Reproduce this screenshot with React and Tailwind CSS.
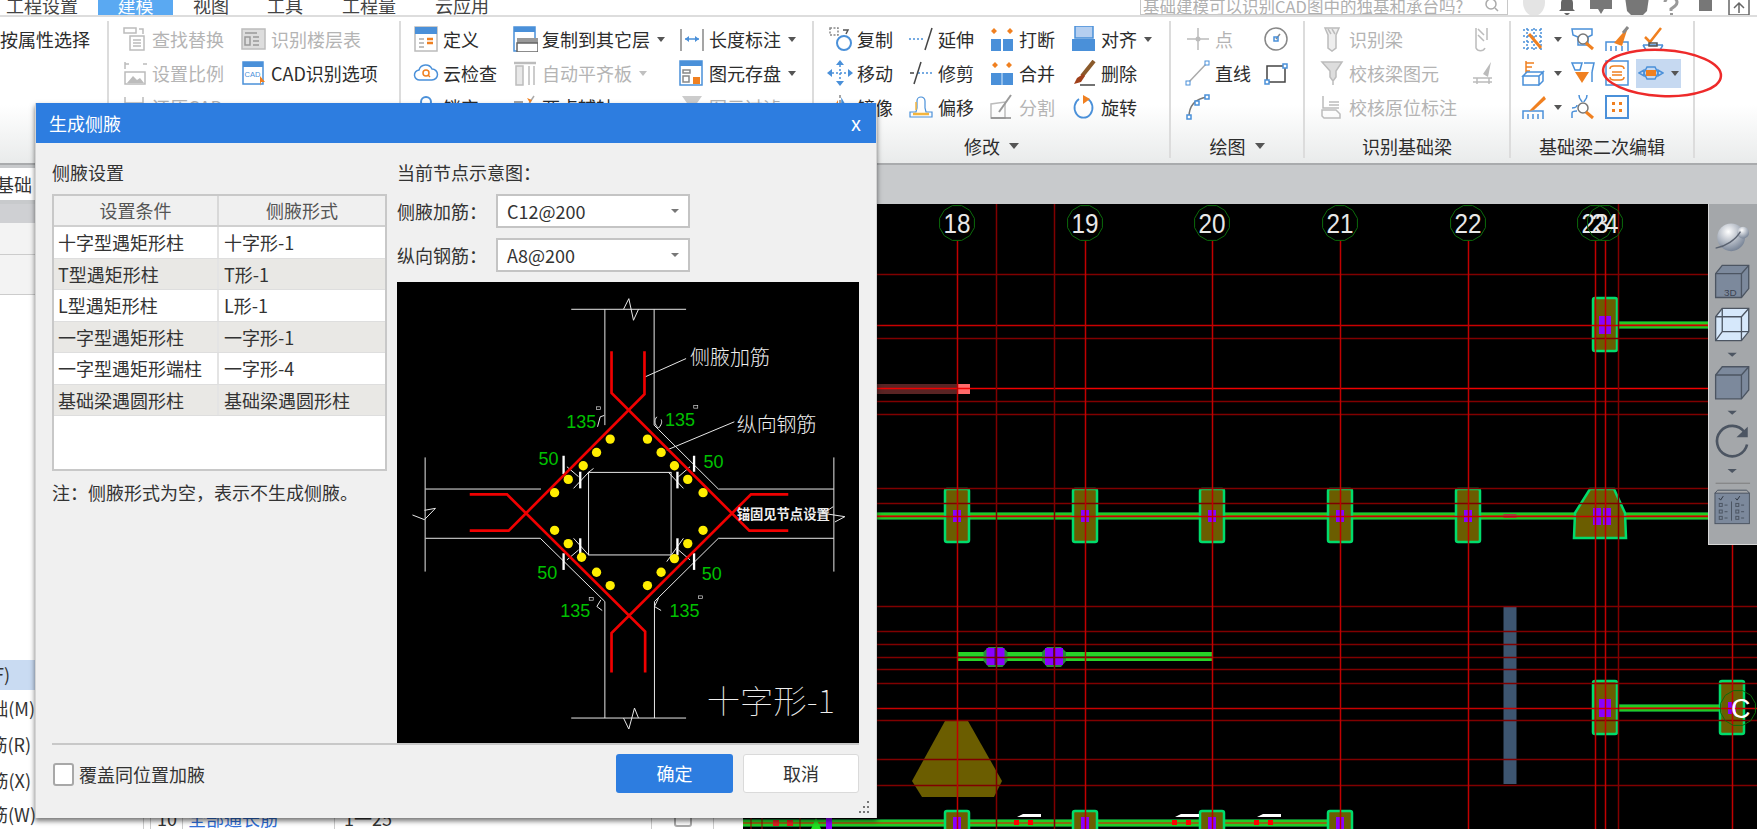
import React from "react";

const B = "#4a90d9";
const O = "#f08020";
const G = "#bcbcbc";

const S = ({ children, w = 26, h = 26 }) => (
  <svg width={w} height={h} viewBox="0 0 26 26" fill="none" strokeWidth="1.5" className="shrink-0">
    {children}
  </svg>
);

const icons = {
  find: <S><g stroke={G}><rect x="2" y="2" width="12" height="5" /><path d="M17 3h4v5" /><rect x="8" y="10" width="14" height="14" /><path d="M11 14h8M11 17h8M11 20h8" /></g></S>,
  scale: <S><g stroke={G}><path d="M3 4h4M3 9V2M21 4h4" /><path d="M3 12h20v12H3z" /></g><path d="M5 23l6-7 4 4 3-2 4 5z" fill={G} /></S>,
  restore: <S><g stroke={G}><path d="M3 3v6h18V3M12 9v14" /></g></S>,
  floor: <S><rect x="1" y="3" width="23" height="20" fill="#ddd" stroke={G} /><path d="M4 7h12M4 11h5v8H4zM12 11h6M12 15h6M12 19h6" stroke="#999" /></S>,
  cad: <S><rect x="2" y="2" width="20" height="22" fill="#fff" stroke={B} /><rect x="2" y="2" width="20" height="5" fill={B} /><text x="3.5" y="17" fontSize="7.5" fill={B} fontFamily="Liberation Sans">CAD</text><path d="M19 16l5 6-4 0-1 4z" fill={O} /></S>,
  define: <S><rect x="2" y="1" width="22" height="24" fill="#fff" stroke="#bbb" /><rect x="2" y="1" width="22" height="7" fill={B} /><path d="M6 13h5M6 17h5M6 21h5" stroke="#aaa" /><path d="M14 13h6M14 17h6" stroke={O} strokeWidth="2.5" /></S>,
  cloud: <S><path d="M7 20a5 5 0 0 1-1-10 7 7 0 0 1 13-1 5.500 5.500 0 0 1 0 11z" stroke={B} /><circle cx="13" cy="13" r="3" stroke={O} /><path d="M15 15l2 2" stroke={O} /></S>,
  batch: <S><circle cx="13" cy="8" r="5" stroke={B} strokeWidth="2" /><path d="M13 13v12" stroke={B} /></S>,
  copyLayer: <S><rect x="2" y="1" width="21" height="24" stroke={B} fill="#fff" /><rect x="2" y="1" width="21" height="5" fill={B} /><rect x="5" y="12" width="21" height="13" fill="#999" /><rect x="5" y="17" width="21" height="9" fill="#fff" stroke="#666" /></S>,
  autoAlign: <S><path d="M2 3h22" stroke={G} strokeWidth="2.500" /><rect x="4" y="6" width="7" height="19" fill="#e8e8e8" stroke={G} /><path d="M17 6v19M22 6v19" stroke={G} /></S>,
  axis: <S><path d="M7 25L22 2" stroke="#aaa" /><path d="M15 4l5 2-2 3z" fill={O} /><path d="M2 8h9M2 16h9" stroke="#888" /></S>,
  length: <S><path d="M2 3v22M24 3v22" stroke="#888" /><path d="M6 13h14" stroke={B} /><path d="M6 13l4-3v6zM20 13l-4-3v6z" fill={B} /></S>,
  save: <S><rect x="1" y="1" width="22" height="24" fill="#fff" stroke={B} /><rect x="1" y="1" width="22" height="5" fill={B} /><path d="M4 10h7v3H4zM4 16h6v6H4z" stroke="#888" /><rect x="14" y="17" width="7" height="7" fill={O} /></S>,
  filter: <S><path d="M3 2h20L16 12v12h-6V12z" fill="#ccc" /></S>,
  copy: <S><rect x="3" y="2" width="8" height="7" stroke="#888" strokeDasharray="2 1.500" /><circle cx="17" cy="17" r="7" stroke={B} strokeWidth="2" /><path d="M16 4h5l-2 4" stroke="#555" /></S>,
  move: <S><path d="M13 5v16M5 13h16" stroke={B} strokeDasharray="2 2" /><path d="M13 0l-4 5h8zM13 26l-4-5h8zM0 13l5-4v8zM26 13l-5-4v8z" fill={B} /></S>,
  mirror: <S><path d="M13 1v24" stroke="#888" strokeDasharray="3 2" /><path d="M11 22V6L2 22z" fill={O} /><path d="M15 22V6l9 16z" stroke={B} /></S>,
  extend: <S><path d="M1 13h14" stroke={B} strokeDasharray="2 2" /><path d="M24 2L17 24" stroke="#444" /></S>,
  trim: <S><path d="M2 13h4" stroke="#444" /><path d="M10 13h14" stroke={B} strokeDasharray="2 2" /><path d="M13 2L6 24" stroke="#444" /></S>,
  offset: <S><path d="M2 23h22v-5h-6l-1-4V7a4 4 0 0 0-8 0v7l-1 4H2z" stroke={B} strokeWidth="1.200" /><path d="M5 20h16" stroke="#f5b53c" strokeWidth="2.500" /><path d="M8 16V8" stroke="#f5b53c" /></S>,
  breakI: <S><rect x="2" y="13" width="10" height="12" fill={B} /><rect x="14" y="13" width="10" height="12" fill={B} /><path d="M5 2l3 3-3 3-3-3zM21 2l3 3-3 3-3-3z" fill={O} /></S>,
  merge: <S><rect x="2" y="13" width="22" height="12" fill={B} /><path d="M13 13v12" stroke="#a9ccf0" /><path d="M6 2l3 3-3 3-3-3zM20 2l3 3-3 3-3-3z" fill={O} /></S>,
  split: <S><path d="M2 24V10l14-2v16z" stroke={G} /><path d="M22 1L10 18" stroke="#999" strokeWidth="2" /><path d="M2 24h20" stroke="#888" /></S>,
  align: <S><rect x="4" y="0" width="18" height="12" fill="#b5cff0" stroke={B} /><rect x="1" y="13" width="23" height="12" fill={B} /></S>,
  del: <S><path d="M23 1L11 16" stroke="#8a5a2b" strokeWidth="4" /><path d="M12 14l-6 4-3 6 7-2 4-6z" fill="#a0401a" /><path d="M9 25h15" stroke="#444" /></S>,
  rotate: <S><path d="M17 5a9 10 0 1 1-9 0" stroke={B} strokeWidth="1.800" /><path d="M12 1l7 4-7 5z" fill={O} /></S>,
  point: <S><path d="M13 2v22M2 13h22" stroke={G} /><circle cx="13" cy="13" r="2.500" fill={G} /></S>,
  dial: <S><circle cx="13" cy="13" r="11" stroke="#888" /><path d="M13 13l4-5" stroke="#888" /><rect x="11" y="11" width="4" height="4" stroke={B} /></S>,
  line: <S><path d="M3 23L22 3" stroke="#aaa" /><rect x="1" y="21" width="4" height="4" stroke={B} fill="#fff" strokeWidth="1" /><rect x="20" y="1" width="4" height="4" stroke={B} fill="#fff" strokeWidth="1" /></S>,
  rectI: <S><path d="M4 6h18v16H4z" stroke="#444" /><rect x="2" y="20" width="4" height="4" stroke={B} fill="#fff" /><rect x="20" y="4" width="4" height="4" stroke={B} fill="#fff" /></S>,
  arc: <S><path d="M4 23C4 12 10 5 22 3" stroke="#777" /><rect x="2" y="21" width="4" height="4" stroke={B} fill="#fff" /><rect x="10" y="7" width="4" height="4" stroke={B} fill="#fff" /><rect x="20" y="1" width="4" height="4" stroke={B} fill="#fff" /></S>,
  beamId: <S><path d="M6 2h14l-3 7v13l-4 3-4-3V9z" stroke={G} fill="#eee" /><path d="M9 3l3 5M13 3l3 5" stroke={G} /></S>,
  beamDim: <S><path d="M7 2v20a5 5 0 0 0 9 0M18 2v12" stroke={G} /><path d="M9 3l6 6M9 9l6 6" stroke={G} /></S>,
  beamCheck: <S><path d="M3 2h20l-6 9v6l-3 4v4-4l-3-4v-6z" fill="#ddd" stroke={G} /></S>,
  beamOrig: <S><path d="M4 2v12h16M10 8h10M10 11h10" stroke={G} /><path d="M3 16h14l4 4v4H5l-2-2z" stroke={G} /></S>,
  pen: <S><path d="M22 2l-8 12 5 3z" fill="#bbb" /><path d="M4 18h19M4 22h19M8 18v6M20 18v6" stroke={G} /></S>,
  e1: <S><g stroke={B}><path d="M2 4h18M2 10h18M2 16h18M2 22h18M6 2v22M13 2v22M20 2v22" strokeDasharray="2 2" /></g><path d="M8 8l12 14" stroke={O} strokeWidth="3" /></S>,
  e2: <S><path d="M2 3h20v6l-4 2v8H8v-8L3 9z" stroke={B} /><circle cx="13" cy="13" r="5" stroke="#777" fill="#fff" /><path d="M16 17l7 6" stroke={O} strokeWidth="3" /></S>,
  e3: <S><path d="M2 25v-9h22v9M7 25v-5M12 25v-5M18 25v-5" stroke={B} /><path d="M24 1L10 17l8 3z" fill={O} /><path d="M24 1l-5 6" stroke="#888" strokeWidth="3" /></S>,
  e4: <S><path d="M5 11l5 5L21 2" stroke={O} strokeWidth="2.500" /><path d="M3 19h20M6 24h14l3-5M6 24l-3-5" stroke={B} /><rect x="9" y="17" width="8" height="3" stroke="#555" /></S>,
  e5: <S><path d="M5 1v12M5 3h8M5 7h6M5 11h4" stroke={O} /><path d="M2 16l4-4h16l-4 4zM2 16h16v9H2zM18 16l4-4v9l-4 4z" stroke={B} /></S>,
  e6: <S><path d="M2 3h10l-2 7h-5zM14 3h10l-2 9" stroke={B} /><path d="M5 12h14l-7 11z" fill={O} /><path d="M22 12v10" stroke={B} /></S>,
  e7: <S><rect x="2" y="1" width="22" height="24" stroke={B} fill="#fff" /><path d="M6 9c0-3 2-3 4-3h6c2 0 4 0 4 3M6 17c0 3 2 3 4 3h6c2 0 4 0 4-3M8 12h10M8 15h10" stroke={O} /></S>,
  e8: <S w={26}><path d="M1 13l5-3v6zM25 13l-5-3v6z" fill="none" stroke={B} /><path d="M6 13l3-6h8l3 6-3 6H9z" stroke={B} /><rect x="8" y="10" width="10" height="6" fill={O} /></S>,
  e9: <S><path d="M2 25v-8h20v8M7 25v-5M12 25v-5M17 25v-5" stroke={B} /><path d="M23 2L11 14l-3 3 5-1L25 5z" fill={O} /></S>,
  e10: <S><path d="M9 1c0 5 3 5 3 7M17 1c0 5-3 5-3 7M2 14c5 0 5-3 5-3M2 24v-5c0-2 3-2 5-2" stroke={B} /><circle cx="13" cy="14" r="5" stroke="#777" fill="#fff" /><path d="M16 18l7 6" stroke={O} strokeWidth="3" /></S>,
  e11: <S><rect x="2" y="2" width="22" height="22" stroke={B} strokeWidth="2" /><path d="M8 8h3v3H8zM15 8h3v3h-3zM8 15h3v3H8zM15 15h3v3h-3z" fill={O} /></S>,
};

const Caret = ({ light, big }) => (
  <span
    className={`w-0 h-0 border-x-transparent ${big ? "border-x-[5px] border-t-[6px] ml-[9px]" : "border-x-[4px] border-t-[5px] ml-[7px]"} ${light ? "border-t-[#c0c0c0]" : "border-t-[#555]"}`}
  />
);

function Tool({ icon, text, gray, caret }) {
  return (
    <div className="h-[34px] flex items-center whitespace-nowrap">
      {icon && <span className="w-[24px] mr-[5px] flex justify-center">{icons[icon]}</span>}
      {text && <span className={gray ? "text-[#b4b4b4]" : "text-[#2c2c2c]"}>{text}</span>}
      {caret && <Caret light={gray} />}
    </div>
  );
}

function Group({ label, caret, width, cols, left }) {
  return (
    <div className="flex flex-col border-r-2 border-[#dcdcdc] h-[137px] shrink-0" style={{ width }}>
      <div className="flex h-[113px] pt-[1px]" style={{ paddingLeft: left }}>
        {cols.map((c, i) => (
          <div key={i} style={{ width: c.w }} className="shrink-0">
            {c.items.map((it, j) => (it ? <Tool key={j} {...it} /> : <div key={j} className="h-[34px]" />))}
          </div>
        ))}
      </div>
      <div className="h-[24px] flex items-center justify-center text-[#2c2c2c] leading-none">
        {label}
        {caret && <Caret big />}
      </div>
    </div>
  );
}

function Ribbon() {
  return (
    <div className="h-[146px] flex pt-[4px] bg-[linear-gradient(180deg,#ffffff_0%,#ffffff_60%,#e9ebeb_100%)] text-[18px]">
      <Group width={109} left={0} cols={[{ w: 108, items: [{ text: "按属性选择" }] }]} label="" />
      <Group width={292} left={14} label=""
        cols={[
          { w: 119, items: [{ icon: "find", text: "查找替换", gray: 1 }, { icon: "scale", text: "设置比例", gray: 1 }, { icon: "restore", text: "还原CAD", gray: 1 }] },
          { w: 150, items: [{ icon: "floor", text: "识别楼层表", gray: 1 }, { icon: "cad", text: "CAD识别选项" }] },
        ]} />
      <Group width={413} left={13} label=""
        cols={[
          { w: 99, items: [{ icon: "define", text: "定义" }, { icon: "cloud", text: "云检查" }, { icon: "batch", text: "锁定" }] },
          { w: 167, items: [{ icon: "copyLayer", text: "复制到其它层", caret: 1 }, { icon: "autoAlign", text: "自动平齐板", gray: 1, caret: 1 }, { icon: "axis", text: "两点辅轴", caret: 1 }] },
          { w: 130, items: [{ icon: "length", text: "长度标注", caret: 1 }, { icon: "save", text: "图元存盘", caret: 1 }, { icon: "filter", text: "图元过滤", gray: 1 }] },
        ]} />
      <Group width={357} left={14} label="修改" caret
        cols={[
          { w: 81, items: [{ icon: "copy", text: "复制" }, { icon: "move", text: "移动" }, { icon: "mirror", text: "镜像" }] },
          { w: 81, items: [{ icon: "extend", text: "延伸" }, { icon: "trim", text: "修剪" }, { icon: "offset", text: "偏移" }] },
          { w: 82, items: [{ icon: "breakI", text: "打断" }, { icon: "merge", text: "合并" }, { icon: "split", text: "分割", gray: 1 }] },
          { w: 95, items: [{ icon: "align", text: "对齐", caret: 1 }, { icon: "del", text: "删除" }, { icon: "rotate", text: "旋转" }] },
        ]} />
      <Group width={134} left={15} label="绘图" caret
        cols={[
          { w: 78, items: [{ icon: "point", text: "点", gray: 1 }, { icon: "line", text: "直线" }, { icon: "arc" }] },
          { w: 30, items: [{ icon: "dial" }, { icon: "rectI" }] },
        ]} />
      <Group width={206} left={15} label="识别基础梁"
        cols={[
          { w: 150, items: [{ icon: "beamId", text: "识别梁", gray: 1 }, { icon: "beamCheck", text: "校核梁图元", gray: 1 }, { icon: "beamOrig", text: "校核原位标注", gray: 1 }] },
          { w: 30, items: [{ icon: "beamDim" }, { icon: "pen" }] },
        ]} />
      <div className="flex flex-col border-r-2 border-[#dcdcdc] h-[137px] w-[184px] shrink-0">
        <div className="h-[113px] pt-[1px] pl-[10px] grid grid-cols-[49px_34px_36px_45px] auto-rows-[34px] items-center">
          <div className="flex items-center">{icons.e1}<Caret /></div>
          {icons.e2}
          {icons.e3}
          {icons.e4}
          <div className="flex items-center">{icons.e5}<Caret /></div>
          {icons.e6}
          {icons.e7}
          <div className="w-[45px] h-[29px] -ml-[4px] bg-[#c6d9f1] flex items-center pl-[2px]">{icons.e8}<Caret /></div>
          <div className="flex items-center">{icons.e9}<Caret /></div>
          {icons.e10}
          {icons.e11}
        </div>
        <div className="h-[24px] flex items-center justify-center text-[#2c2c2c] leading-none mt-[2px]">基础梁二次编辑</div>
      </div>
      <div className="flex-1" />
    </div>
  );
}

function MenuBar() {
  const items = [
    ["工程设置", "ml-[6px] w-[92px]"],
    ["建模", "w-[75px] bg-[#5aa9f2] text-white text-center"],
    ["视图", "ml-[20px] w-[74px]"],
    ["工具", "w-[75px]"],
    ["工程量", "w-[93px]"],
    ["云应用", "w-[60px]"],
  ];
  return (
    <div className="h-[17px] flex items-start overflow-hidden bg-white border-b-2 border-[#dddddd] text-[18px] text-[#444]">
      {items.map(([t, c]) => (
        <div key={t} className={`${c} h-[17px] shrink-0`}>
          <div className="leading-[18px] -mt-[4px]">{t}</div>
        </div>
      ))}
      <div className="ml-[645px] w-[368px] h-[15px] shrink-0 border border-[#c8c8c8] border-t-0 flex items-end justify-between pl-[2px] pr-[8px] text-[#b0b0b0] overflow-hidden">
        <span className="text-[16.500px] leading-[18px] -mb-[1px] whitespace-nowrap">基础建模可以识别CAD图中的独基和承台吗?</span>
        <svg width="14" height="14" viewBox="0 0 14 14" fill="none" stroke="#aaa" strokeWidth="1.500"><circle cx="6" cy="4" r="5" /><path d="M10 8l3 3" /></svg>
      </div>
      <svg width="240" height="17" viewBox="0 0 240 17" className="ml-[14px] shrink-0">
        <ellipse cx="12" cy="2" rx="11" ry="14" fill="#e4e4e4" />
        <path d="M45 -3a6 6 0 0 1 6 6v6l2 2H37l2-2V3a6 6 0 0 1 6-6zM42 13h6l-3 3z" fill="#666" />
        <path d="M68 -8h22v17h-8l-3 5-3-5h-8z" fill="#777" />
        <path d="M103 -3h24l-2 14-4 4h-12l-4-4z" fill="#777" />
        <path d="M143 2a6 5 0 1 1 10 4l-4 3v2" fill="none" stroke="#999" strokeWidth="3" />
        <rect x="148" y="13" width="3" height="3" fill="#999" />
        <rect x="177" y="-3" width="13" height="14" fill="#777" />
        <path d="M207 -3v18h20V-3M217 13V4M212 8l5-5 5 5" fill="none" stroke="#666" strokeWidth="1.500" />
      </svg>
    </div>
  );
}

function Node({ x, y, big }) {
  return (
    <g>
      <rect x={x - 12} y={y - 27} width="24" height="53" rx="2" fill="#6b5d00" stroke="#00dc6c" strokeWidth="2.500" />
      <rect x={x - (big ? 6 : 4)} y={y - (big ? 9 : 6)} width={big ? 12 : 8} height={big ? 18 : 12} fill="#8a00ff" />
    </g>
  );
}

const Beam = ({ x1, x2, y }) => (
  <g>
    <rect x={x1} y={y - 4} width={x2 - x1} height="8" fill="#0e7a2c" />
    <rect x={x1} y={y - 3} width={x2 - x1} height="6" fill="#22cc22" />
    <rect x={x1} y={y - 1} width={x2 - x1} height="2" fill="#8a6a10" />
  </g>
);

const Arrow = ({ x }) => (
  <g>
    <path d={`M${x - 6} 817l6-3h18v3z`} fill="#fff" />
    <rect x={x - 9} y="820" width="5" height="5" fill="#f00" />
    <rect x={x + 5} y="820" width="5" height="5" fill="#f00" />
  </g>
);

const polyPoints = (cx, cy, r) =>
  Array.from({ length: 12 }, (_, i) => {
    const a = (i * Math.PI) / 6 + Math.PI / 12;
    return `${(cx + r * Math.cos(a)).toFixed(1)},${(cy + r * Math.sin(a)).toFixed(1)}`;
  }).join(" ");

function Canvas() {
  const axes = [[957, "18"], [1085, "19"], [1212, "20"], [1340, "21"], [1468, "22"], [1595, "23"], [1605, "24"]];
  const darkV = [996, 1054, 1618];
  const darkH = [274, 338, 401, 414, 488, 503, 606, 631, 644, 657, 669, 683, 720, 759, 785];
  return (
    <svg width="1014" height="625" viewBox="743 204 1014 625" className="block">
      <rect x="743" y="204" width="1014" height="625" fill="#000" />
      <Beam x1={743} x2={1708} y={516} />
      <Beam x1={1617} x2={1708} y={325} />
      <Beam x1={1617} x2={1722} y={708} />
      <Beam x1={743} x2={1340} y={823} />
      <path d="M816 818l5 11h-10z" fill="#22e022" />
      <rect x="773" y="820" width="6" height="6" fill="#e02020" />
      <rect x="787" y="820" width="6" height="6" fill="#e02020" />
      <rect x="826" y="818" width="6" height="11" fill="#8a00ff" />
      <path d="M751 818v11M762 818v11M800 818v11" stroke="#a00000" />
      <g>
        <rect x="958" y="652" width="254" height="9" fill="#28d428" />
        <rect x="958" y="656" width="254" height="1.500" fill="#14801a" />
        {[995.500, 1054].map((x) => (
          <g key={x}>
            <path d={`M${x - 12} 652l5-5h14l5 5v9l-5 6h-14l-5-6z`} fill="#2a8a3a" />
            <rect x={x - 9} y="648" width="18" height="17" fill="#8a00ff" />
            <rect x={x - 1} y="648" width="2" height="17" fill="#3a1060" />
          </g>
        ))}
      </g>
      <path d="M945 721h23l34 60-8 16h-72l-10-16z" fill="#6b5d00" />
      <rect x="1503.500" y="606" width="13" height="178" fill="#3d5570" />
      <rect x="877" y="384" width="81" height="10" fill="#5a2424" />
      <rect x="958" y="384" width="12" height="10" fill="#ff6a6a" />
      <rect x="1503.500" y="514" width="13" height="4" fill="#a04040" />
      {[957, 1085, 1212, 1340, 1468].map((x) => <Node key={x} x={x} y={516} />)}
      <Node x={1605} y={325} big />
      <Node x={1605} y={708} big />
      <Node x={1732} y={708} />
      {[957, 1085, 1212, 1340].map((x) => (
        <g key={x}>
          <rect x={x - 12} y="811" width="24" height="40" rx="2" fill="#6b5d00" stroke="#00dc6c" strokeWidth="2.500" />
          <rect x={x - 4} y="817" width="8" height="12" fill="#8a00ff" />
        </g>
      ))}
      <path d="M1590 489h24l11 24 1 25h-52l1-25z" fill="#6b5d00" stroke="#00dc6c" strokeWidth="2.500" />
      <rect x="1593" y="508" width="18" height="17" fill="#8a00ff" />
      <rect x="1601" y="508" width="2" height="17" fill="#6b5d00" />
      <Arrow x={1023} />
      <Arrow x={1181} />
      <Arrow x={1263} />
      {darkH.map((y) => <line key={y} x1="743" x2="1757" y1={y + 0.5} y2={y + 0.5} stroke="#800000" strokeWidth="1.500" />)}
      {[325, 516, 708].map((y) => <line key={y} x1="743" x2="1757" y1={y + 0.5} y2={y + 0.5} stroke="#c80000" strokeWidth="1.500" />)}
      <line x1="743" x2="1757" y1="388.500" y2="388.500" stroke="#f00000" strokeWidth="1.500" />
      {darkV.map((x) => <line key={x} x1={x + 0.5} x2={x + 0.5} y1="204" y2="829" stroke="#800000" strokeWidth="1.500" />)}
      {axes.map(([x]) => <line key={x} x1={x + 0.5} x2={x + 0.5} y1="241" y2="829" stroke="#c00000" strokeWidth="1.500" />)}
      <line x1="1732.500" x2="1732.500" y1="545" y2="829" stroke="#c00000" strokeWidth="1.500" />
      {axes.map(([x, t]) => (
        <g key={t}>
          <polygon points={polyPoints(x, 223, 18)} fill="none" stroke="#0b6b0b" />
          <text x={x} y="233" textAnchor="middle" fontSize="27" fill="#e8e8e8" textLength="27" lengthAdjust="spacingAndGlyphs" fontFamily="Liberation Sans">{t}</text>
        </g>
      ))}
      <polygon points={polyPoints(1738, 708, 18)} fill="none" stroke="#0b6b0b" />
      <text x="1731" y="718" fontSize="27" fill="#fff" fontFamily="Liberation Sans">C</text>
    </svg>
  );
}

function ViewToolbar() {
  const f = "#7c899c";
  const s = "#4c5562";
  const box = (y, fill, extra) => (
    <g stroke={s} strokeWidth="4">
      <path d={`M165 ${y + 25}l20-25h80v70l-22 27H165z`} fill={f} />
      <path d={`M165 ${y + 25}h78v72M243 ${y + 25}l22-25`} fill="none" />
      {extra}
    </g>
  );
  const tri = (y) => <path d={`M201 ${y}h28l-14 12z`} fill="#4c5562" />;
  return (
    <div className="absolute top-0 right-0 w-[49px] h-[341px] bg-[#a4a7aa] border-l border-b border-[#d8d8d8]">
      <svg width="48" height="340" viewBox="145 15 145 1020" className="block">
        <defs>
          <radialGradient id="ball" cx="40%" cy="30%" r="75%">
            <stop offset="0" stopColor="#ffffff" />
            <stop offset="1" stopColor="#6f7c90" />
          </radialGradient>
        </defs>
        <circle cx="212" cy="112" r="42" fill="url(#ball)" />
        <circle cx="248" cy="98" r="18" fill="url(#ball)" />
        <path d="M165 145c30-5 60-25 75-50" stroke="#5a6270" strokeWidth="4" fill="none" />
        {box(197, f, <text x="190" y="288" fontSize="30" fill="#3c4452" stroke="none" fontFamily="Liberation Sans">3D</text>)}
        <g stroke={s} strokeWidth="4">
          <path d="M165 352l20-25h80v70l-22 27H165z" fill="#d6e8fb" />
          <path d="M165 352h78v72M243 352l22-25M185 327v70h80M185 397l-20 27" fill="none" />
        </g>
        {tri(461)}
        {box(503, f)}
        {tri(636)}
        <path d="M252 700a46 46 0 1 0 8 38" fill="none" stroke={s} strokeWidth="8" />
        <path d="M262 684v32h-34z" fill={s} />
        {tri(812)}
        <path d="M165 855h104" stroke="#7d7d7d" strokeWidth="3" />
        <g stroke={s} strokeWidth="3">
          <rect x="163" y="885" width="104" height="92" fill={f} />
          <path d="M163 885l8-9h88l8 9M213 910v58" fill="none" />
          <path d="M175 900l5 6 8-12M225 900l5 6 8-12" fill="none" stroke="#2f3642" />
          {[916, 936, 955].map((y) => (
            <g key={y} fill="none">
              <rect x="176" y={y} width="9" height="9" />
              <path d={`M192 ${y + 5}h9`} />
              <rect x="226" y={y} width="9" height="9" />
              <path d={`M242 ${y + 5}h9`} />
            </g>
          ))}
        </g>
      </svg>
    </div>
  );
}

function Diagram() {
  const W = { stroke: "#e8e8e8", strokeWidth: 3, fill: "none" };
  const dots = [[660,507],[619,547],[579,587],[534,628],[493,668],[772,507],[813,547],[853,587],[893,628],[939,668],[493,781],[534,821],[574,862],[619,907],[660,947],[939,781],[893,821],[853,866],[813,907],[772,947]];
  const ticks = [[520,557,612],[570,605,655],[862,605,655],[912,557,605],[520,850,900],[570,805,855],[862,805,855],[912,850,900]];
  const g135 = [[528,473],[825,468],[510,1040],[838,1040]];
  const g50 = [[445,586],[940,594],[441,928],[935,930]];
  const deg = [[625,414],[917,410],[603,987],[931,982]];
  return (
    <svg width="462" height="461" viewBox="20 35 1387 1385" className="block bg-black shrink-0">
      <g {...W}>
        <path d="M543 117h345M644 117v348M792 117v348l13 13 180 179h347M1332 562v343M1332 805H985L793 995v350M543 1345h345M644 1345V995L450 805H105M104 562v343M105 657h347" />
        <rect x="595" y="607" width="248" height="248" />
        <path d="M700 117l16-32 14 65 15-33M700 1345l16 33 17-63 12 30M66 735l36 14 33-34-33 6M1330 710l-30 20 65 10-30 16" />
        <path d="M765 320l123-55M830 540l203-85" />
        <path d="M622 470l8-30 12-4M800 440c-8 10-8 22 5 34c8-8 12-18 8-26M632 990l-12 20 16 12M805 985l-12 25 20 12" />
        <path d="M530 590l35 30M550 655l45-48M610 595l-18 14M900 590l-35 30M880 655l-45-48M530 870l35-30M550 805l45 50M900 870l-35-30M880 805l-50 70" />
      </g>
      {ticks.map(([x, a, b], i) => <line key={i} x1={x} x2={x} y1={a} y2={b} stroke="#fff" strokeWidth="7" />)}
      <g stroke="#f00000" strokeWidth="8" fill="none">
        <path d="M664 243v125l414 414h117" />
        <path d="M763 243v129L355 782H238" />
        <path d="M238 673h112l415 412v123" />
        <path d="M1195 673h-112L664 1090v118" />
      </g>
      {dots.map(([x, y], i) => <circle key={i} cx={x} cy={y} r="14" fill="#ffee00" />)}
      <g fill="#00c000" fontSize="54" fontFamily="Liberation Sans">
        {g135.map(([x, y], i) => <text key={i} x={x} y={y}>135</text>)}
        {g50.map(([x, y], i) => <text key={i} x={x} y={y}>50</text>)}
      </g>
      {deg.map(([x, y], i) => <rect key={i} x={x - 6} y={y - 4} width="12" height="8" fill="none" stroke="#ddd" strokeWidth="2" />)}
      <g fill="#eeeeee" fontFamily="Noto Sans CJK SC">
        <text x="900" y="284" fontSize="60" fontWeight="300">侧腋加筋</text>
        <text x="1040" y="485" fontSize="60" fontWeight="300">纵向钢筋</text>
        <text x="1040" y="746" fontSize="40" fontWeight="700">锚固见节点设置</text>
        <text x="950" y="1331" fontSize="96" fontWeight="100" textLength="385" lengthAdjust="spacingAndGlyphs">十字形-1</text>
      </g>
    </svg>
  );
}

function Select({ label, value }) {
  return (
    <div className="flex items-center h-[34px]">
      <span className="w-[99px] shrink-0">{label}</span>
      <div className="w-[194px] h-full bg-white border-2 border-[#c4c4c4] flex items-center justify-between pl-[9px] pr-[9px] text-[#333]">
        <span>{value}</span>
        <span className="w-0 h-0 border-x-[4px] border-x-transparent border-t-[4px] border-t-[#777]" />
      </div>
    </div>
  );
}

function Dialog() {
  const rows = [
    ["十字型遇矩形柱", "十字形-1"],
    ["T型遇矩形柱", "T形-1"],
    ["L型遇矩形柱", "L形-1"],
    ["一字型遇矩形柱", "一字形-1"],
    ["一字型遇矩形端柱", "一字形-4"],
    ["基础梁遇圆形柱", "基础梁遇圆形柱"],
  ];
  return (
    <div className="absolute left-[35px] top-[103px] w-[842px] h-[715px] bg-[#f0f0f0] flex flex-col text-[18px] text-[#333] shadow-[0_3px_5px_rgba(0,0,0,0.55)] border-x border-[#d4d4d4]">
      <div className="h-[40px] bg-[#2d7de0] text-white flex items-center justify-between pl-[13px] pr-[15px] shrink-0">
        <span>生成侧腋</span>
        <span className="text-[20px] leading-none">x</span>
      </div>
      <div className="flex pl-[16px] pt-[17px] gap-[10px] h-[600px]">
        <div className="w-[335px] shrink-0">
          <div className="h-[24px] leading-[24px]">侧腋设置</div>
          <div className="mt-[10px] h-[277px] bg-white border-2 border-[#c8c8c8]">
            <div className="grid grid-cols-[165px_1fr] h-[31px] bg-[#f0f0f0] border-b-2 border-[#d0d0d0] text-[#555] text-center leading-[29px]">
              <div className="border-r-2 border-[#d8d8d8]">设置条件</div>
              <div>侧腋形式</div>
            </div>
            {rows.map(([a, b], i) => (
              <div key={a} className={`grid grid-cols-[165px_1fr] h-[31.500px] leading-[30px] border-b border-[#dedede] ${i % 2 ? "bg-[#e9e8e5]" : "bg-white"}`}>
                <div className="pl-[4px] border-r-2 border-[#e4e4e4] whitespace-nowrap">{a}</div>
                <div className="pl-[5px] whitespace-nowrap">{b}</div>
              </div>
            ))}
          </div>
          <div className="mt-[8px] leading-[26px]">注：侧腋形式为空，表示不生成侧腋。</div>
        </div>
        <div className="w-[462px] shrink-0">
          <div className="h-[24px] leading-[24px]">当前节点示意图：</div>
          <div className="mt-[10px] flex flex-col gap-[10px]">
            <Select label="侧腋加筋：" value="C12@200" />
            <Select label="纵向钢筋：" value="A8@200" />
          </div>
          <div className="mt-[10px]"><Diagram /></div>
        </div>
      </div>
      <div className="ml-[16px] mr-[17px] h-[2px] bg-[#c8c8c8] shrink-0" />
      <div className="flex items-start justify-between ml-[16px] mr-[17px] pt-[9px]">
        <div className="flex items-center mt-[7px] ml-[1px]">
          <span className="w-[21px] h-[23px] bg-white border-2 border-[#a8a8a8] rounded-[3px]" />
          <span className="ml-[5px]">覆盖同位置加腋</span>
        </div>
        <div className="flex gap-[10px]">
          <button className="w-[117px] h-[39px] rounded-[3px] bg-[#2d7de0] text-white text-[18px]">确定</button>
          <button className="w-[116px] h-[39px] rounded-[3px] bg-white border border-[#dadada] text-[#333] text-[18px]">取消</button>
        </div>
      </div>
      <svg width="13" height="13" viewBox="0 0 13 13" className="absolute right-[5px] bottom-[4px]" fill="#777">
        <rect x="9" y="0" width="2" height="2" /><rect x="5" y="5" width="2" height="2" /><rect x="9" y="5" width="2" height="2" /><rect x="1" y="10" width="2" height="2" /><rect x="5" y="10" width="2" height="2" /><rect x="9" y="10" width="2" height="2" />
      </svg>
    </div>
  );
}

function LeftPane() {
  const nav = [
    ["筏板主筋(F)", "bg-[#c9dbf2] h-[31px]", "w-[10px]"],
    ["基础(M)", "h-[37px]", "w-[35px]"],
    ["主筋(R)", "h-[35px]", "w-[31px]"],
    ["箍筋(X)", "h-[38px]", "w-[31px]"],
    ["腰筋(W)", "h-[30px]", "w-[36px]"],
  ];
  return (
    <div className="w-[743px] h-full bg-white flex text-[18px] text-[#333] shrink-0">
      <div className="w-[143px] flex flex-col shrink-0">
        <div className="h-[19px] bg-[#cfd0d3]" />
        <div className="h-[32px] bg-[#f3f3f3] border-b border-[#cccccc]" />
        <div className="h-[41px] bg-[#f3f3f3] border-b border-[#cccccc]" />
        <div className="h-[368px]" />
        {nav.map(([t, c, w]) => (
          <div key={t} className={`${c} flex items-center`}>
            <div className={`${w} overflow-hidden flex justify-end whitespace-nowrap`}>{t}</div>
          </div>
        ))}
      </div>
      <div className="flex-1 flex flex-col justify-end">
        <div className="h-[23px] flex border-t border-[#ddd] items-center leading-none">
          <div className="w-[7px] h-full border-l border-[#ccc]" />
          <div className="w-[33px] h-full border-x border-[#ccc] flex items-center justify-end pr-[5px]">10</div>
          <div className="w-[152px] h-full border-r border-[#ccc] pl-[5px] flex items-center text-[#2f6fd8] whitespace-nowrap">全部通长筋</div>
          <div className="w-[317px] h-full border-r border-[#ccc] pl-[9px] flex items-center">1一25</div>
          <div className="w-[62px] h-full border-r border-[#ccc] flex items-center justify-center">
            <span className="w-[18px] h-[18px] border-2 border-[#aaa] rounded-[3px]" />
          </div>
        </div>
      </div>
    </div>
  );
}

export default function App() {
  return (
    <div className="relative w-[1757px] h-[829px] overflow-hidden bg-white font-['Noto_Sans_CJK_SC','Liberation_Sans',sans-serif]">
      <MenuBar />
      <Ribbon />
      <div className="h-[41px] bg-[#c8cacc] border-t-2 border-[#a9abad] pt-[3px] text-[18px] text-[#333]">
        <div className="w-[35px] h-[32px] bg-white overflow-hidden leading-[32px] whitespace-nowrap">
          <span className="block -ml-[4px]">基础</span>
        </div>
      </div>
      <div className="flex h-[625px]">
        <LeftPane />
        <div className="relative flex-1">
          <Canvas />
          <ViewToolbar />
        </div>
      </div>
      <svg width="130" height="60" viewBox="0 0 130 60" fill="none" className="absolute left-[1597px] top-[44px] pointer-events-none">
        <ellipse cx="65" cy="29" rx="59" ry="23" stroke="#ee2a2a" strokeWidth="2.500" transform="rotate(3 65 29)" />
      </svg>
      <Dialog />
    </div>
  );
}
